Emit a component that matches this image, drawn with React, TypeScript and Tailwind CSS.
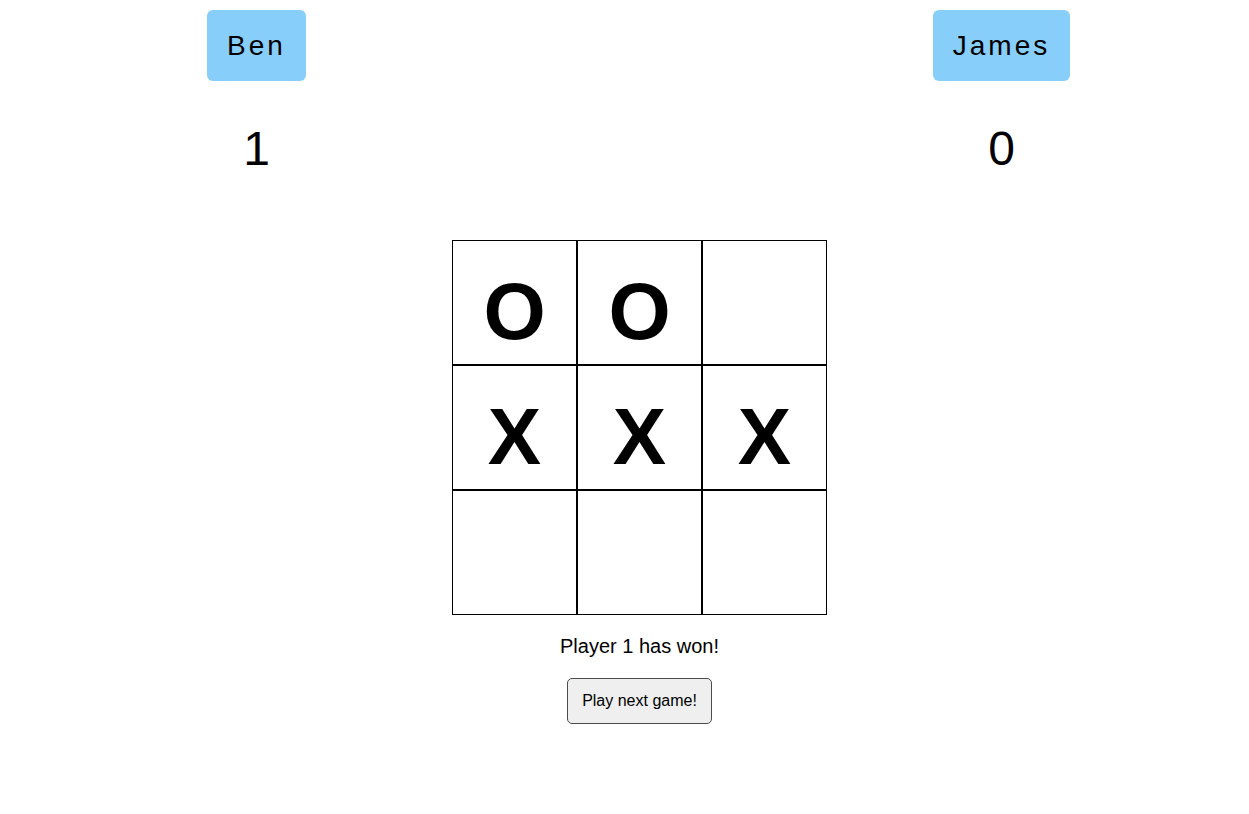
const board = ['O', 'O', '', 'X', 'X', 'X', '', '', ''];

function Player({ name, score, className }: { name: string; score: number; className?: string }) {
  return (
    <div className={`flex w-[199px] flex-col items-center ${className ?? ''}`}>
      <div className="mt-[10px] flex h-[71px] items-center rounded-[6px] bg-[#87cefa] px-[20px] text-[28px] tracking-[3px] text-black">
        {name}
      </div>
      <div className="mt-[40px] text-[48px] leading-[56px] text-black">{score}</div>
    </div>
  );
}

export default function App() {
  return (
    <div className="min-h-screen bg-white font-['Liberation_Sans',Arial,sans-serif]">
      <div className="flex pl-[157px]">
        <Player name="Ben" score={1} />
        <Player name="James" score={0} className="ml-[546px]" />
      </div>
      <div className="mt-[63px] flex flex-col items-center pl-[30px]">
        <div className="grid grid-cols-3">
          {board.map((cell, i) => (
            <div
              key={i}
              className="flex h-[125px] w-[125px] items-center justify-center border border-black pt-[18px] text-[80px] font-bold leading-none text-black"
            >
              {cell}
            </div>
          ))}
        </div>
        <p className="mt-[19px] text-[20px] leading-[24px] text-black">Player 1 has won!</p>
        <button className="mt-[20px] h-[46px] rounded-[5px] border border-[#4b4b4b] bg-[#efefef] px-[14px] text-[16px] text-black">
          Play next game!
        </button>
      </div>
    </div>
  );
}
